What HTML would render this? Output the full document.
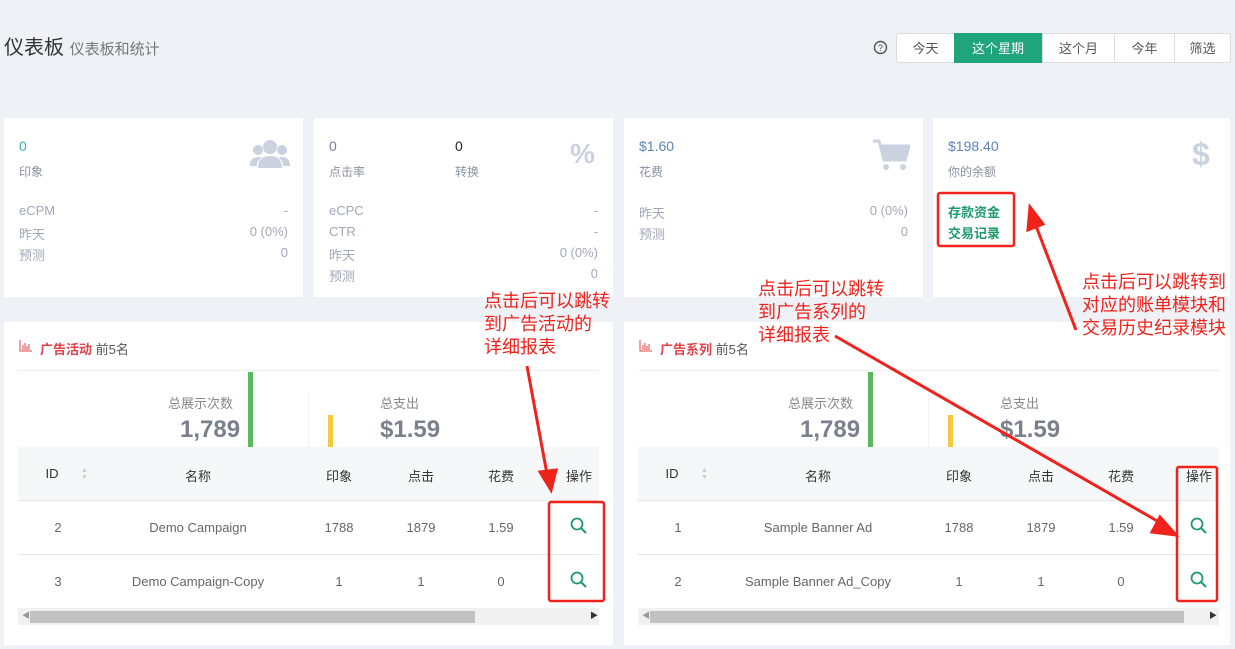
<!DOCTYPE html>
<html><head><meta charset="utf-8"><style>
*{margin:0;padding:0;box-sizing:border-box}
body{width:1235px;height:649px;background:#eef1f5;font-family:"Liberation Sans","Noto Sans CJK SC",sans-serif;position:relative;overflow:hidden;color:#333}
.a{position:absolute;white-space:nowrap}
.card{position:absolute;background:#fff;top:118px;height:179px}
.g{color:#a0a8b5;font-size:13px}
.lbl{font-size:12px;color:#8a93a0}
.panel{position:absolute;background:#fff;top:322px;height:323px}
.th{position:absolute;top:447px;height:53px;background:#f6f7f9}
.cell{position:absolute;transform:translateX(-50%);font-size:13px;color:#666}
.red{color:#f0221c;font-size:18px;line-height:23px}
.btn{position:absolute;top:33px;height:30px;line-height:30px;text-align:center;font-size:13px;color:#555;background:#fff;border:1px solid #ddd}
</style></head><body>
<div class="a" style="left:4px;top:31px;font-size:20px;color:#333">仪表板 <span style="font-size:15px;color:#777">仪表板和统计</span></div>
<svg class="a" style="left:873px;top:40px" width="15" height="15"><circle cx="7.5" cy="7.5" r="6" fill="none" stroke="#555" stroke-width="1.4"/><text x="7.5" y="11" font-size="9" text-anchor="middle" fill="#555" font-family="Liberation Sans">?</text></svg>
<div class="btn" style="left:896px;width:59px;border-radius:3px 0 0 3px">今天</div>
<div class="btn" style="left:954px;width:88px;background:#1ea57a;color:#fff;border-color:#1ea57a">这个星期</div>
<div class="btn" style="left:1042px;width:73px">这个月</div>
<div class="btn" style="left:1114px;width:61px">今年</div>
<div class="btn" style="left:1174px;width:57px;border-radius:0 3px 3px 0">筛选</div>

<div class="card" style="left:4px;width:299px">
<div class="a" style="left:15px;top:20px;color:#3fb0a8;font-size:14px">0</div>
<div class="a lbl" style="left:15px;top:45px">印象</div>
<svg class="a" style="left:246px;top:20px" width="40" height="32"><circle cx="20" cy="9" r="7" fill="#cbd2df"/><circle cx="8" cy="12" r="5" fill="#cbd2df"/><circle cx="32" cy="12" r="5" fill="#cbd2df"/><path d="M8 30 Q8 18 20 18 Q32 18 32 30Z" fill="#cbd2df"/><path d="M0 28 Q0 19 8 19 L12 19 Q6 24 7 28Z M40 28 Q40 19 32 19 L28 19 Q34 24 33 28Z" fill="#cbd2df"/></svg>
<div class="a g" style="left:15px;top:85px">eCPM</div><div class="a g" style="right:15px;top:85px">-</div>
<div class="a g" style="left:15px;top:106px">昨天</div><div class="a g" style="right:15px;top:106px">0 (0%)</div>
<div class="a g" style="left:15px;top:127px">预测</div><div class="a g" style="right:15px;top:127px">0</div>
</div>
<div class="card" style="left:314px;width:299px">
<div class="a" style="left:15px;top:20px;color:#8679a0;font-size:14px">0</div>
<div class="a lbl" style="left:15px;top:45px">点击率</div>
<div class="a" style="left:141px;top:20px;color:#222;font-size:14px">0</div>
<div class="a lbl" style="left:141px;top:45px">转换</div>
<div class="a" style="left:256px;top:20px;font-size:28px;font-weight:bold;color:#cbd2df">%</div>
<div class="a g" style="left:15px;top:85px">eCPC</div><div class="a g" style="right:15px;top:85px">-</div>
<div class="a g" style="left:15px;top:106px">CTR</div><div class="a g" style="right:15px;top:106px">-</div>
<div class="a g" style="left:15px;top:127px">昨天</div><div class="a g" style="right:15px;top:127px">0 (0%)</div>
<div class="a g" style="left:15px;top:148px">预测</div><div class="a g" style="right:15px;top:148px">0</div>
</div>
<div class="card" style="left:624px;width:299px">
<div class="a" style="left:15px;top:20px;color:#5c84b8;font-size:14px">$1.60</div>
<div class="a lbl" style="left:15px;top:45px">花费</div>
<svg class="a" style="left:248px;top:20px" width="38" height="34"><path d="M1 3 H7 L12 22 H33 L37 8 H9" fill="none" stroke="#cbd2df" stroke-width="3"/><path d="M9 8 H37 L33 22 H12Z" fill="#cbd2df"/><circle cx="14" cy="29" r="3" fill="#cbd2df"/><circle cx="31" cy="29" r="3" fill="#cbd2df"/></svg>
<div class="a g" style="left:15px;top:85px">昨天</div><div class="a g" style="right:15px;top:85px">0 (0%)</div>
<div class="a g" style="left:15px;top:106px">预测</div><div class="a g" style="right:15px;top:106px">0</div>
</div>
<div class="card" style="left:933px;width:297px">
<div class="a" style="left:15px;top:20px;color:#5c84b8;font-size:14px">$198.40</div>
<div class="a lbl" style="left:15px;top:45px">你的余额</div>
<div class="a" style="left:259px;top:18px;font-size:32px;font-weight:bold;color:#cbd2df">$</div>
<div class="a" style="left:15px;top:84px;font-size:13px;color:#1e9a6c;font-weight:bold">存款资金</div>
<div class="a" style="left:15px;top:105px;font-size:13px;color:#1e9a6c;font-weight:bold">交易记录</div>
</div>

<div class="panel" style="left:4px;width:609px"></div>
<div class="panel" style="left:624px;width:606px"></div>

<div id="L">
<svg class="a" style="left:19px;top:340px" width="13" height="12"><path d="M1 0V11H13" stroke="#e0434a" fill="none"/><path d="M4 5V10M6 3V10M8 6V10M10 4V10" stroke="#e0434a"/></svg>
<div class="a" style="left:40px;top:339px;font-size:13px;color:#e0434a;font-weight:bold">广告活动 <span style="color:#555;font-weight:normal">前5名</span></div>
<div class="a" style="left:18px;top:370px;width:581px;height:1px;background:#eee"></div>
<div class="a" style="left:168px;top:393px;font-size:13px;color:#888">总展示次数</div>
<div class="a" style="left:180px;top:416px;font-size:24px;font-weight:bold;color:#7a808c">1,789</div>
<div class="a" style="left:248px;top:372px;width:5px;height:75px;background:#5cb85c"></div>
<div class="a" style="left:308px;top:392px;width:1px;height:55px;background:#f2f2f2"></div>
<div class="a" style="left:328px;top:415px;width:5px;height:32px;background:#f5c83d"></div>
<div class="a" style="left:380px;top:393px;font-size:13px;color:#888">总支出</div>
<div class="a" style="left:380px;top:416px;font-size:24px;font-weight:bold;color:#7a808c">$1.59</div>
<div class="th" style="left:18px;width:581px"></div>
<div class="cell" style="left:52px;top:466px;color:#333">ID</div>
<div class="a" style="left:81px;top:467px;font-size:7px;color:#ccc;line-height:7px">▲<br>▼</div>
<div class="cell" style="left:198px;top:466px;color:#333">名称</div>
<div class="cell" style="left:339px;top:466px;color:#333">印象</div>
<div class="cell" style="left:421px;top:466px;color:#333">点击</div>
<div class="cell" style="left:501px;top:466px;color:#333">花费</div>
<div class="cell" style="left:579px;top:466px;color:#333">操作</div>
<div class="a" style="left:18px;top:500px;width:581px;height:1px;background:#e6e6e6"></div>
<div class="a" style="left:18px;top:554px;width:581px;height:1px;background:#e6e6e6"></div>
<div class="cell" style="left:58px;top:520px">2</div><div class="cell" style="left:198px;top:520px">Demo Campaign</div><div class="cell" style="left:339px;top:520px">1788</div><div class="cell" style="left:421px;top:520px">1879</div><div class="cell" style="left:501px;top:520px">1.59</div>
<div class="cell" style="left:58px;top:574px">3</div><div class="cell" style="left:198px;top:574px">Demo Campaign-Copy</div><div class="cell" style="left:339px;top:574px">1</div><div class="cell" style="left:421px;top:574px">1</div><div class="cell" style="left:501px;top:574px">0</div>
<svg class="a" style="left:570px;top:517px" width="18" height="18"><circle cx="7" cy="7" r="5.5" fill="none" stroke="#1e9a6c" stroke-width="1.8"/><path d="M11 11L16 16" stroke="#1e9a6c" stroke-width="2"/></svg>
<svg class="a" style="left:570px;top:571px" width="18" height="18"><circle cx="7" cy="7" r="5.5" fill="none" stroke="#1e9a6c" stroke-width="1.8"/><path d="M11 11L16 16" stroke="#1e9a6c" stroke-width="2"/></svg>
<div class="a" style="left:18px;top:608px;width:581px;height:17px;background:#f1f1f1"></div>
<div class="a" style="left:30px;top:611px;width:445px;height:12px;background:#c1c1c1"></div>
<div class="a" style="left:22px;top:610px;font-size:8px;color:#999">◀</div><div class="a" style="left:590px;top:610px;font-size:8px;color:#333">▶</div>
</div>

<div id="R">
<svg class="a" style="left:639px;top:340px" width="13" height="12"><path d="M1 0V11H13" stroke="#e0434a" fill="none"/><path d="M4 5V10M6 3V10M8 6V10M10 4V10" stroke="#e0434a"/></svg>
<div class="a" style="left:660px;top:339px;font-size:13px;color:#e0434a;font-weight:bold">广告系列 <span style="color:#555;font-weight:normal">前5名</span></div>
<div class="a" style="left:638px;top:370px;width:581px;height:1px;background:#eee"></div>
<div class="a" style="left:788px;top:393px;font-size:13px;color:#888">总展示次数</div>
<div class="a" style="left:800px;top:416px;font-size:24px;font-weight:bold;color:#7a808c">1,789</div>
<div class="a" style="left:868px;top:372px;width:5px;height:75px;background:#5cb85c"></div>
<div class="a" style="left:928px;top:392px;width:1px;height:55px;background:#f2f2f2"></div>
<div class="a" style="left:948px;top:415px;width:5px;height:32px;background:#f5c83d"></div>
<div class="a" style="left:1000px;top:393px;font-size:13px;color:#888">总支出</div>
<div class="a" style="left:1000px;top:416px;font-size:24px;font-weight:bold;color:#7a808c">$1.59</div>
<div class="th" style="left:638px;width:581px"></div>
<div class="cell" style="left:672px;top:466px;color:#333">ID</div>
<div class="a" style="left:701px;top:467px;font-size:7px;color:#ccc;line-height:7px">▲<br>▼</div>
<div class="cell" style="left:818px;top:466px;color:#333">名称</div>
<div class="cell" style="left:959px;top:466px;color:#333">印象</div>
<div class="cell" style="left:1041px;top:466px;color:#333">点击</div>
<div class="cell" style="left:1121px;top:466px;color:#333">花费</div>
<div class="cell" style="left:1199px;top:466px;color:#333">操作</div>
<div class="a" style="left:638px;top:500px;width:581px;height:1px;background:#e6e6e6"></div>
<div class="a" style="left:638px;top:554px;width:581px;height:1px;background:#e6e6e6"></div>
<div class="cell" style="left:678px;top:520px">1</div><div class="cell" style="left:818px;top:520px">Sample Banner Ad</div><div class="cell" style="left:959px;top:520px">1788</div><div class="cell" style="left:1041px;top:520px">1879</div><div class="cell" style="left:1121px;top:520px">1.59</div>
<div class="cell" style="left:678px;top:574px">2</div><div class="cell" style="left:818px;top:574px">Sample Banner Ad_Copy</div><div class="cell" style="left:959px;top:574px">1</div><div class="cell" style="left:1041px;top:574px">1</div><div class="cell" style="left:1121px;top:574px">0</div>
<svg class="a" style="left:1190px;top:517px" width="18" height="18"><circle cx="7" cy="7" r="5.5" fill="none" stroke="#1e9a6c" stroke-width="1.8"/><path d="M11 11L16 16" stroke="#1e9a6c" stroke-width="2"/></svg>
<svg class="a" style="left:1190px;top:571px" width="18" height="18"><circle cx="7" cy="7" r="5.5" fill="none" stroke="#1e9a6c" stroke-width="1.8"/><path d="M11 11L16 16" stroke="#1e9a6c" stroke-width="2"/></svg>
<div class="a" style="left:638px;top:608px;width:581px;height:17px;background:#f1f1f1"></div>
<div class="a" style="left:650px;top:611px;width:534px;height:12px;background:#c1c1c1"></div>
<div class="a" style="left:642px;top:610px;font-size:8px;color:#999">◀</div><div class="a" style="left:1209px;top:610px;font-size:8px;color:#333">▶</div>
</div>

<div class="a red" style="left:484px;top:290px">点击后可以跳转<br>到广告活动的<br>详细报表</div>
<div class="a red" style="left:758px;top:278px">点击后可以跳转<br>到广告系列的<br>详细报表</div>
<div class="a red" style="left:1082px;top:271px">点击后可以跳转到<br>对应的账单模块和<br>交易历史纪录模块</div>
<svg class="a" style="left:0;top:0" width="1235" height="649">
<g fill="none" stroke="#f0221c" stroke-width="2.5">
<rect x="549" y="502" width="55" height="99" rx="2"/>
<rect x="1177" y="467" width="40" height="134" rx="2"/>
<rect x="938" y="193" width="76" height="53" rx="2"/>
</g>
<g stroke="#f0221c" stroke-width="3" fill="#f0221c">
<line x1="527" y1="366" x2="547" y2="474"/>
<path d="M540 472 L556 470 L551 490Z"/>
<line x1="835" y1="336" x2="1166" y2="526"/>
<path d="M1160 517 L1176 535 L1152 532Z"/>
<line x1="1076" y1="330" x2="1036" y2="226"/>
<path d="M1028 230 L1030 207 L1043 224Z"/>
</g>
</svg>
</body></html>
